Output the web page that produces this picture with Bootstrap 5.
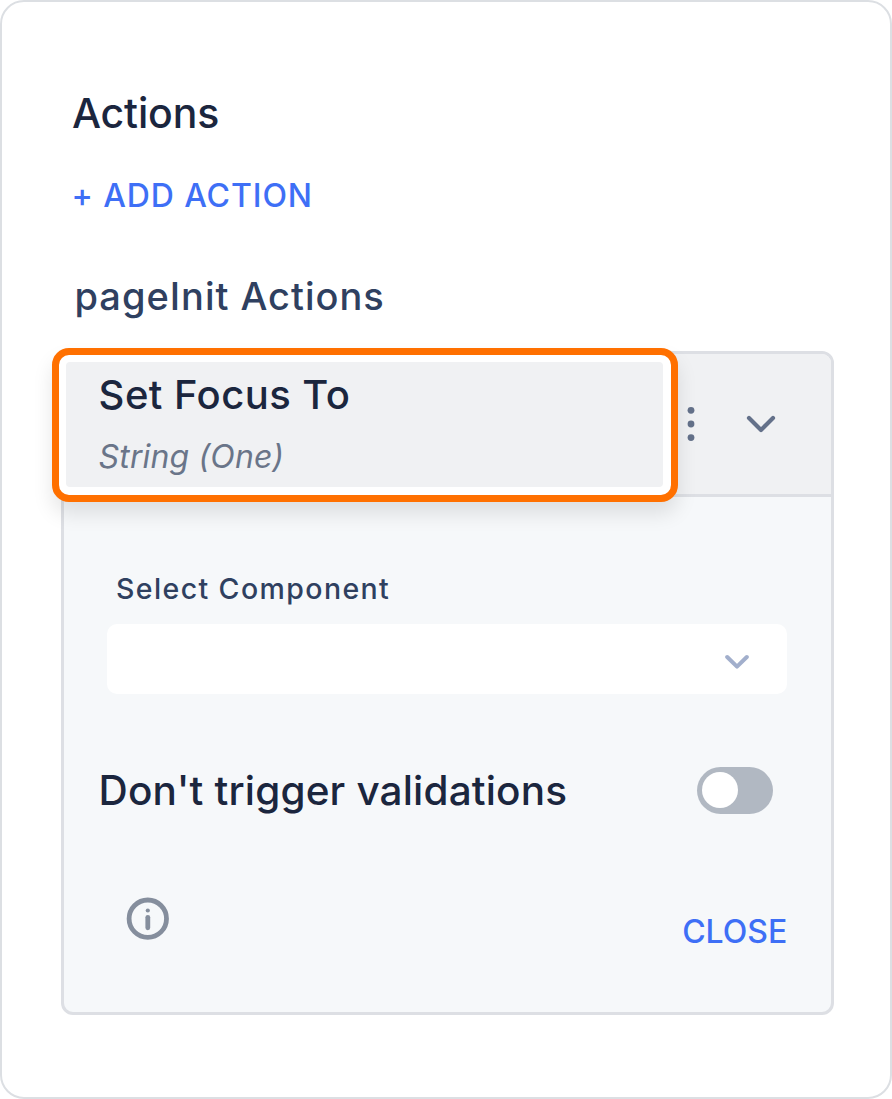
<!DOCTYPE html>
<html lang="en">
<head>
<meta charset="utf-8">
<meta name="viewport" content="width=device-width, initial-scale=1">
<title>Actions</title>
<link href="https://cdn.jsdelivr.net/npm/bootstrap@5.3.0/dist/css/bootstrap.min.css" rel="stylesheet">
<style>
  body { font-family: Inter, "Liberation Sans", sans-serif; color: #1b263e; background: #fff; }
  .frame { height: 1099px; border: 2px solid #dcdfe3; border-radius: 24px; padding: 86px 56px 0 58.5px; }
  .title { font-size: 41px; line-height: 50px; font-weight: 500; letter-spacing: -.15px; margin-left: 11.5px; }
  .link-action { font-size: 32px; line-height: 40px; font-weight: 450; letter-spacing: .9px; color: #3e6ff6; background: none; border: 0; padding: 0; }
  .add-action { margin: 38px 0 56px 11px; }
  .subtitle { font-size: 38px; line-height: 48px; font-weight: 500; letter-spacing: .98px; color: #2f4060; margin: 0 0 31px 14px; }
  .panel { height: 664px; border: 3px solid #dddfe4; border-radius: 12px; background: #f6f8fa; overflow: visible; }
  .panel-top { height: 143px; background: #f0f1f3; border-bottom: 3px solid #dddfe4; border-radius: 9px 9px 0 0; padding-right: 53px; gap: 48px; }
  .spotlight { left: -12px; top: -6.5px; width: 626px; height: 154px; border: 7px solid #ff7000; border-radius: 17px; padding: 7.5px; background: #fff; box-shadow: 0 12px 20px rgba(0,0,0,.1); }
  .spotlight-inner { background: #f0f1f3; border-radius: 4px; height: 125px; padding: 9px 0 0 32.6px; }
  .action-name { font-size: 40px; line-height: 48px; font-weight: 500; letter-spacing: .45px; }
  .action-type { font-size: 32px; line-height: 40px; font-style: italic; letter-spacing: .15px; color: #6a7589; margin-top: 18px; }
  .panel-main { padding: 73.5px 44.5px 0 43.5px; }
  .field-label { font-size: 28.5px; line-height: 36px; font-weight: 500; letter-spacing: 1.4px; color: #2f4060; margin: 0 0 17.5px 9px; }
  .picker { height: 70px; background: #fff; border: 0; border-radius: 10px; padding-right: 37px; }
  .option-row { height: 50px; margin: 71px 14px 0 -8.5px; }
  .option-name { font-size: 40.5px; line-height: 50px; font-weight: 500; letter-spacing: .16px; padding-top: 2px; }
  .toggle { width: 76px; height: 47px; border-radius: 24px; background: #b1b8c2; padding-left: 5px; }
  .knob { width: 36px; height: 36px; border-radius: 50%; background: #fff; }
  .panel-foot { margin: 82px -.8px 0 19px; }
  .panel-foot .link-action { margin-top: 14.5px; letter-spacing: 0; }
</style>
</head>
<body>
<main class="frame">
  <h1 class="title mb-0">Actions</h1>
  <button type="button" class="link-action add-action d-block">+ ADD ACTION</button>
  <h2 class="subtitle">pageInit Actions</h2>
  <section class="panel">
    <header class="panel-top position-relative d-flex align-items-center justify-content-end">
      <div class="spotlight position-absolute">
        <div class="spotlight-inner">
          <div class="action-name">Set Focus To</div>
          <div class="action-type">String (One)</div>
        </div>
      </div>
      <svg width="10" height="38" viewBox="0 0 10 38" fill="#64718a"><circle cx="5" cy="5.3" r="3.4"/><circle cx="5" cy="19" r="3.4"/><circle cx="5" cy="32.6" r="3.4"/></svg>
      <svg width="34" height="24" viewBox="0 0 34 24" fill="none" stroke="#64718a" stroke-width="4.2" stroke-linecap="round" stroke-linejoin="round"><path d="M5 6 17 18 29 6"/></svg>
    </header>
    <div class="panel-main">
      <div class="field-label">Select Component</div>
      <div class="picker d-flex align-items-center justify-content-end">
        <svg width="26" height="20" viewBox="0 0 26 20" fill="none" stroke="#a2afcc" stroke-width="4" stroke-linecap="round" stroke-linejoin="round"><path d="M3.200 8 13 17.600 22.800 8"/></svg>
      </div>
      <div class="option-row d-flex align-items-center justify-content-between">
        <span class="option-name">Don't trigger validations</span>
        <div class="toggle d-flex align-items-center" role="switch" aria-checked="false"><div class="knob"></div></div>
      </div>
      <div class="panel-foot d-flex align-items-start justify-content-between">
        <svg width="44" height="44" viewBox="0 0 44 44" fill="none" stroke="#858e9d"><circle cx="21.800" cy="21.700" r="18.700" stroke-width="4.800"/><path d="M21.800 20.300v10.500" stroke-width="4.800" stroke-linecap="round"/><circle cx="21.800" cy="13.500" r="2.100" fill="#858e9d" stroke="none"/></svg>
        <button type="button" class="link-action">CLOSE</button>
      </div>
    </div>
  </section>
</main>
<script src="https://cdn.jsdelivr.net/npm/bootstrap@5.3.0/dist/js/bootstrap.bundle.min.js"></script>
</body>
</html>
